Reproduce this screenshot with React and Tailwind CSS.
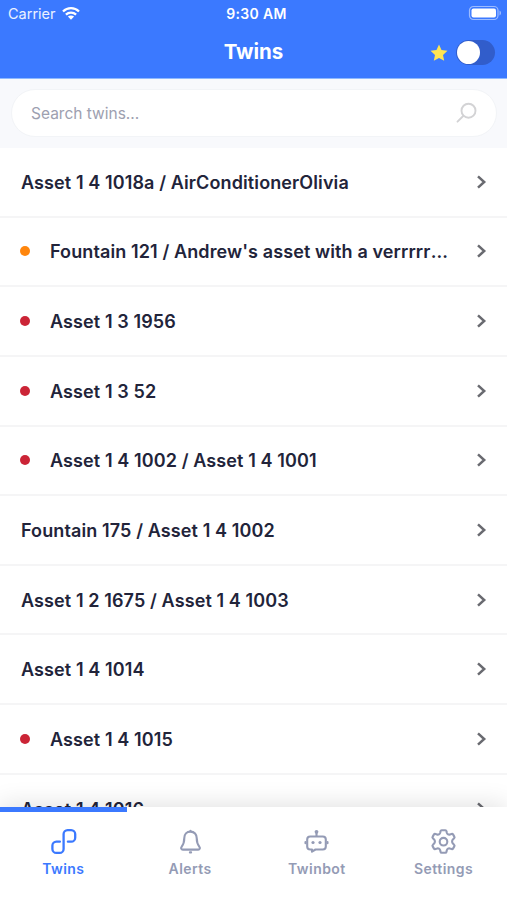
import { useState } from 'react';

const twins = [
  { name: 'Asset 1 4 1018a / AirConditionerOlivia' },
  { name: "Fountain 121 / Andrew's asset with a verrrrry long name", status: 'warning' },
  { name: 'Asset 1 3 1956', status: 'critical' },
  { name: 'Asset 1 3 52', status: 'critical' },
  { name: 'Asset 1 4 1002 / Asset 1 4 1001', status: 'critical' },
  { name: 'Fountain 175 / Asset 1 4 1002' },
  { name: 'Asset 1 2 1675 / Asset 1 4 1003' },
  { name: 'Asset 1 4 1014' },
  { name: 'Asset 1 4 1015', status: 'critical' },
  { name: 'Asset 1 4 1016' },
];

const statusColors = {
  warning: 'bg-[#ff860d]',
  critical: 'bg-[#cb2436]',
};

const TwinsIcon = () => (
  <svg width="27" height="27" viewBox="0 0 27 27" fill="none" stroke="currentColor" strokeWidth="2.3" strokeLinecap="round">
    <path d="M9.9 13.7H6.4a4 4 0 0 0-4 4v3.2a4 4 0 0 0 4 4h3.2a4 4 0 0 0 4-4V6.100a4 4 0 0 1 4-4h3.600a4 4 0 0 1 4 4v3.600a4 4 0 0 1-4 4h-3.300" />
  </svg>
);

const BellIcon = () => (
  <svg width="27" height="27" viewBox="0 0 27 27" fill="none" stroke="currentColor" strokeWidth="2.1" strokeLinecap="round" strokeLinejoin="round">
    <path d="M13.5 3.6c-3.900 0-6.200 2.900-6.200 6.500 0 4.800-1 6.600-2.700 8.700-1 1.300-.4 2.800 1.200 2.800h15.400c1.600 0 2.200-1.500 1.200-2.800-1.700-2.100-2.700-3.900-2.700-8.700 0-3.600-2.300-6.500-6.200-6.500Z" />
    <path d="M13.5 2.800v.5M12.900 24.400h1.200" />
  </svg>
);

const BotIcon = () => (
  <svg width="27" height="27" viewBox="0 0 27 27" fill="none" stroke="currentColor" strokeWidth="2.1" strokeLinecap="round" strokeLinejoin="round">
    <path d="M7.200 8.500h12.600a3 3 0 0 1 3 3v7a3 3 0 0 1-3 3h-7.300l-3.500 2.200v-2.200H7.200a3 3 0 0 1-3-3v-7a3 3 0 0 1 3-3Z" />
    <path d="M13.5 8V4.500M2.500 14v1.200M24.500 14v1.200" />
    <circle cx="13.5" cy="3.800" r="1.900" fill="currentColor" stroke="none" />
    <circle cx="10" cy="14.500" r="1.600" fill="currentColor" stroke="none" />
    <circle cx="17" cy="14.500" r="1.600" fill="currentColor" stroke="none" />
  </svg>
);

const GearIcon = () => (
  <svg width="27" height="27" viewBox="0 0 27 27" fill="none" stroke="currentColor" strokeWidth="2.1" strokeLinejoin="round">
    <path d="M11.700 2.200h3.600q1 0 1.200 1l.3 1.500q.3 1.100 1.200 1.600.9.500 2 .1l1.500-.5q1-.3 1.500.5l1.300 2.200q.6 1-.2 1.700l-1.200 1.100q-.8.900-.8 2.100t.8 2.100l1.200 1.100q.8.700.2 1.700L23 20.600q-.5.800-1.500.5l-1.500-.5q-1.100-.4-2 .1-.9.500-1.200 1.600l-.3 1.500q-.2 1-1.200 1h-3.600q-1 0-1.200-1l-.3-1.500q-.3-1.100-1.200-1.600-.9-.5-2-.1l-1.500.5q-1 .3-1.500-.5l-1.300-2.200q-.6-1 .2-1.700l1.200-1.100q.8-.9.800-2.100t-.8-2.100l-1.200-1.100q-.8-.7-.2-1.700L4 6.400q.5-.8 1.500-.5l1.500.5q1.100.4 2-.1.900-.5 1.200-1.600l.3-1.500q.2-1 1.200-1Z" />
    <circle cx="13.5" cy="13.700" r="3.800" />
  </svg>
);

const tabs = [
  { label: 'Twins', Icon: TwinsIcon },
  { label: 'Alerts', Icon: BellIcon },
  { label: 'Twinbot', Icon: BotIcon },
  { label: 'Settings', Icon: GearIcon },
];

const StatusBar = () => (
  <div className="grid h-7 grid-cols-3 items-center pl-2 pr-[5px] text-[14.5px] leading-7 text-white">
    <div className="flex items-center gap-1.5">
      <span className="text-white/90">Carrier</span>
      <svg className="-translate-y-px" width="18" height="13" viewBox="0 0 18 13" fill="none" stroke="white" strokeWidth="2.3">
        <path d="M1 4.500C5.500.1 12.500.1 17 4.500M3.900 7.700c2.900-2.700 7.300-2.700 10.200 0" />
        <path d="M9 12.700 5.900 9.600c1.700-1.600 4.500-1.600 6.200 0L9 12.700Z" fill="white" stroke="none" />
      </svg>
    </div>
    <span className="whitespace-nowrap pl-[3px] text-center text-[14px] font-semibold tracking-[0.3px]">9:30 AM</span>
    <svg className="-translate-y-px justify-self-end" width="34" height="16" viewBox="0 0 34 16">
      <rect x="1.5" y="1.5" width="28.5" height="13" rx="4" fill="none" stroke="#9dbcff" strokeWidth="1.2" />
      <rect x="3.5" y="3.5" width="24.5" height="9" rx="2" fill="white" />
      <path d="M31.5 5.5c2 .8 2 4.200 0 5Z" fill="#9dbcff" />
    </svg>
  </div>
);

const Header = ({ favorites, onToggle }) => (
  <header className="h-[79px] shrink-0 border-b border-[#8eb9ff] bg-[#3b79ff]">
    <StatusBar />
    <div className="grid h-[49px] grid-cols-3 items-center pr-3">
      <h1 className="col-start-2 pl-3 text-center text-[20.5px] font-bold text-white">Twins</h1>
      <div className="flex items-center justify-end gap-2">
        <svg width="18" height="18" viewBox="0 0 18 18" fill="#ffe552">
          <path d="m9 .6 2.500 5.500 6 .7-4.500 4.100 1.200 5.900L9 13.900l-5.200 2.900L5 10.900.5 6.800l6-.7L9 .6Z" />
        </svg>
        <button
          role="switch"
          aria-checked={favorites}
          aria-label="Favorites only"
          onClick={onToggle}
          className={`flex h-[25px] w-[39px] items-center rounded-full bg-[#315dcb] px-px ${favorites ? 'justify-end' : ''}`}
        >
          <span className="h-[23px] w-[23px] rounded-full bg-white"></span>
        </button>
      </div>
    </div>
  </header>
);

const SearchBar = ({ value, onChange }) => (
  <div className="h-[69px] shrink-0 bg-[#f8f9fc] pl-[11px] pr-2.5 pt-2.5">
    <label className="flex h-12 items-center rounded-full border border-[#f2f4f7] bg-white pl-[19px] pr-[19px]">
      <input
        value={value}
        onChange={(e) => onChange(e.target.value)}
        placeholder="Search twins..."
        className="min-w-0 flex-1 bg-transparent pt-0.5 text-[15.5px] text-gray-700 outline-none placeholder:text-[#9da0b0]"
      />
      <svg width="22" height="22" viewBox="0 0 22 22" fill="none" stroke="#d3d3d5" strokeWidth="1.900" strokeLinecap="round">
        <circle cx="13.5" cy="8.700" r="7" />
        <path d="m8.200 14-5.700 5.700" />
      </svg>
    </label>
  </div>
);

const TwinRow = ({ name, status }) => (
  <li className="flex h-[69.65px] shrink-0 items-center border-b-2 border-[#f5f5f6] pl-[21px] pr-5">
    {status && <span className={`mr-5 -ml-px h-2.5 w-2.5 shrink-0 rounded-full ${statusColors[status]}`}></span>}
    <span className="min-w-0 flex-1 truncate pt-px text-[18px] font-semibold tracking-[0.11px] text-[#22243a]">{name}</span>
    <svg className="ml-[26px] shrink-0" width="11" height="14" viewBox="0 0 11 14" fill="none" stroke="#696a70" strokeWidth="2.5">
      <path d="m2 1.300 6.200 5.700L2 12.700" />
    </svg>
  </li>
);

const TabBar = ({ active, onSelect }) => (
  <nav className="relative grid h-[93px] shrink-0 grid-cols-4 bg-white shadow-[0_-2px_24px_rgba(0,0,0,0.12)]">
    {tabs.map(({ label, Icon }, i) => (
      <button
        key={label}
        onClick={() => onSelect(i)}
        className={`flex flex-col items-center border-t-[5px] pt-4 ${
          active === i ? 'border-[#3b79ff] text-[#3b79ff]' : 'border-transparent text-[#949bb5]'
        }`}
      >
        <Icon />
        <span className="mt-1 text-[14px] font-semibold leading-5 tracking-[0.45px]">{label}</span>
      </button>
    ))}
  </nav>
);

export default function App() {
  const [favorites, setFavorites] = useState(false);
  const [search, setSearch] = useState('');
  const [activeTab, setActiveTab] = useState(0);

  const visible = twins.filter((t) => t.name.toLowerCase().includes(search.toLowerCase()));

  return (
    <div className="flex h-screen flex-col overflow-hidden bg-white font-['Inter',sans-serif]">
      <Header favorites={favorites} onToggle={() => setFavorites(!favorites)} />
      <SearchBar value={search} onChange={setSearch} />
      <ul className="flex min-h-0 flex-1 flex-col overflow-hidden">
        {visible.map((t) => (
          <TwinRow key={t.name} {...t} />
        ))}
      </ul>
      <TabBar active={activeTab} onSelect={setActiveTab} />
    </div>
  );
}
